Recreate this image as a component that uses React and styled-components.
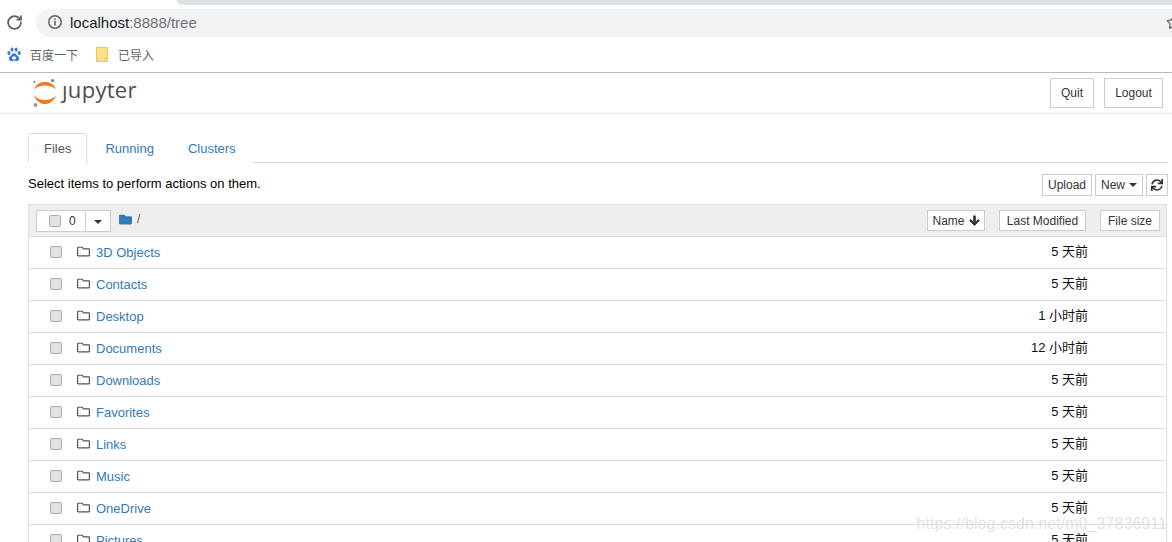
import React from 'react';
import styled, { createGlobalStyle } from 'styled-components';
import { FaFolder, FaRegFolder, FaArrowDown, FaSync } from 'react-icons/fa';
import { RotateCw, Star } from 'lucide-react';

const GlobalStyle = createGlobalStyle`
    html, body {
        margin: 0;
        padding: 0;
        background: #fff;
        overflow: hidden;
    }
    * {
        box-sizing: border-box;
    }
    body {
        font-family: "Liberation Sans", "Noto Sans CJK SC", sans-serif;
        font-size: 13px;
        color: #000;
    }
`

const Page = styled.div`
    position: relative;
    width: 1172px;
    height: 542px;
    overflow: hidden;
`

const TabStrip = styled.div`
    height: 5px;
    padding-left: 177px;
    background: #fff;
`

const TabShape = styled.div`
    height: 5px;
    background: #dee1e6;
    border-bottom-left-radius: 8px;
`

const Toolbar = styled.div`
    display: flex;
    align-items: center;
    height: 32px;
    padding-top: 4px;
`

const ReloadSlot = styled.div`
    display: flex;
    justify-content: center;
    width: 36px;
    padding: 0 8px 2px 0;
    color: #5f6368;
`

const Omnibox = styled.div`
    flex: 1;
    display: flex;
    align-items: center;
    height: 28px;
    padding: 0 0 2px 11px;
    background: #f1f3f4;
    border-radius: 14px 0 0 14px;
    font-size: 15px;
    position: relative;
`

const Host = styled.span`
    margin-left: 7px;
    color: #202124;
`

const UrlRest = styled.span`
    color: #6f7378;
`

const StarSlot = styled.span`
    position: absolute;
    right: -9px;
    top: 6px;
    color: #5f6368;
`

const BookmarkBar = styled.div`
    display: flex;
    align-items: center;
    height: 36px;
    padding-left: 7px;
    padding-bottom: 1px;
    font-size: 12px;
    color: #5f6368;
    border-bottom: 1px solid #b9b9b9;
`

const Bookmark = styled.div`
    display: flex;
    align-items: center;
    gap: ${(p) => p.$gap}px;
    margin-right: 18px;
`

const Header = styled.div`
    display: flex;
    justify-content: space-between;
    align-items: center;
    height: 41px;
    padding: 0 9px 0 32px;
    border-bottom: 1px solid #e7e7e7;
`

const Logo = styled.div`
    display: flex;
    align-items: center;
    gap: 4px;
    margin-top: -2px;
`

const LogoText = styled.span`
    font-family: "Open Sans", sans-serif;
    font-size: 22px;
    line-height: 30px;
    color: #4e4e4e;
    letter-spacing: 0.3px;
    margin-top: -7px;
`

const HeaderButtons = styled.div`
    display: flex;
    gap: 10px;
`

const Button = styled.button`
    display: inline-flex;
    align-items: center;
    justify-content: center;
    gap: ${(p) => p.$gap || 0}px;
    width: ${(p) => p.$w}px;
    height: ${(p) => p.$h}px;
    padding: 0;
    background: #fff;
    border: 1px solid #ccc;
    font-family: inherit;
    font-size: 12px;
    color: #333;
`

const Main = styled.div`
    padding: 19px 4px 0 28px;
`

const Tabs = styled.div`
    display: flex;
    height: 30px;
    border-bottom: 1px solid #ddd;
`

const Tab = styled.div`
    height: 30px;
    padding: 7px ${(p) => (p.$active ? 15 : 16)}px 0;
    margin-right: ${(p) => (p.$active ? 1 : 0)}px;
    line-height: 15px;
    color: ${(p) => (p.$active ? '#555' : '#337ab7')};
    background: #fff;
    border: 1px solid ${(p) => (p.$active ? '#ddd' : 'transparent')};
    border-bottom-color: ${(p) => (p.$active ? '#fff' : 'transparent')};
    border-radius: 2px 2px 0 0;
`

const ActionRow = styled.div`
    display: flex;
    justify-content: space-between;
    align-items: center;
    height: 41px;
    font-size: 13px;
`

const Actions = styled.div`
    display: flex;
    gap: 3px;
    margin-top: 2px;
`

const List = styled.div`
    border: 1px solid #ddd;
    border-bottom: 0;
    margin-right: 1px;
`

const ListHeader = styled.div`
    display: flex;
    align-items: center;
    height: 31px;
    padding: 0 6px 0 7px;
    background: #eee;
`

const SelectGroup = styled.div`
    display: flex;
    height: 22px;
    background: #fff;
    border: 1px solid #ccc;
`

const SelectCount = styled.div`
    display: flex;
    align-items: center;
    gap: 8px;
    width: 49px;
    padding-left: 12px;
    font-size: 12px;
    color: #333;
    border-right: 1px solid #ccc;
`

const SelectCaret = styled.div`
    display: flex;
    align-items: center;
    justify-content: center;
    width: 24px;
    padding-top: 2px;
`

const Caret = styled.span`
    display: inline-block;
    width: 0;
    height: 0;
    border-top: 4px solid #333;
    border-left: 4px solid transparent;
    border-right: 4px solid transparent;
`

const Crumb = styled.div`
    display: flex;
    align-items: center;
    gap: 5px;
    flex: 1;
    margin: -3px 0 0 8px;
    font-size: 12px;
    color: #337ab7;
`

const Slash = styled.span`
    color: #555;
`

const SortButtons = styled.div`
    display: flex;
    gap: 14px;
`

const Row = styled.div`
    display: flex;
    align-items: center;
    height: 32px;
    padding: 0 0 2px 21px;
    border-top: 1px solid #ddd;
`

const Check = styled.span`
    flex: none;
    width: 12px;
    height: 12px;
    background: #e3e3e3;
    border: 1px solid #ababab;
    border-radius: 2px;
`

const FolderIcon = styled.span`
    display: flex;
    width: 14px;
    margin-left: 15px;
    color: #555;
`

const RowLink = styled.a`
    flex: 1;
    margin-left: 5px;
    font-size: 13px;
    color: #337ab7;
    padding-top: 1px;
`

const RowDate = styled.span`
    width: 200px;
    margin-right: 78px;
    margin-top: -2px;
    text-align: right;
    font-size: 13px;
    color: #111;
`

const Watermark = styled.div`
    position: absolute;
    right: 5px;
    bottom: 9px;
    font-size: 16px;
    letter-spacing: 0.05px;
    color: rgba(170, 170, 170, 0.36);
    text-shadow: 0 0 1px rgba(255, 255, 255, 0.7);
    pointer-events: none;
`

const rows = [
    ['3D Objects', '5 天前'],
    ['Contacts', '5 天前'],
    ['Desktop', '1 小时前'],
    ['Documents', '12 小时前'],
    ['Downloads', '5 天前'],
    ['Favorites', '5 天前'],
    ['Links', '5 天前'],
    ['Music', '5 天前'],
    ['OneDrive', '5 天前'],
    ['Pictures', '5 天前'],
];

function InfoIcon() {
    return (
        <svg width="16" height="16" viewBox="0 0 16 16">
            <circle cx="8" cy="8" r="6.2" fill="none" stroke="#5f6368" strokeWidth="1.5" />
            <rect x="7.2" y="7" width="1.6" height="4.4" fill="#5f6368" />
            <rect x="7.2" y="4.5" width="1.6" height="1.6" fill="#5f6368" />
        </svg>
    );
}

function BaiduIcon() {
    return (
        <svg width="14" height="15" viewBox="0 0 14 15" fill="#3a7bd5">
            <ellipse cx="2" cy="6" rx="1.6" ry="2" />
            <ellipse cx="5" cy="2.6" rx="1.5" ry="2.1" />
            <ellipse cx="9.2" cy="2.6" rx="1.5" ry="2.1" />
            <ellipse cx="12.2" cy="6" rx="1.6" ry="2" />
            <path d="M7 6.2c-1.8 0-2.4 1.8-3.6 2.8C2 10.2 1.6 11 1.9 12.3c.4 1.4 1.8 1.9 3 1.7.9-.1 1.4-.3 2.1-.3s1.300.2 2.200.3c1.200.2 2.600-.3 3-1.700.3-1.300-.2-2.100-1.500-3.300C9.500 8 8.800 6.200 7 6.200z" />
            <ellipse cx="7" cy="11" rx="2" ry="1.800" fill="#fff" />
        </svg>
    );
}

function BookmarkFile() {
    return (
        <svg width="12" height="15" viewBox="0 0 12 15">
            <path d="M.5.5h11v14H.5z" fill="#fbe08a" stroke="#f2c94c" />
            <path d="M9 14v-3h2.500" fill="none" stroke="#f2c94c" />
        </svg>
    );
}

function JupyterMark() {
    return (
        <svg width="26" height="30" viewBox="0 0 26 30">
            <path d="M2 12.500C4 6.500 9 5 13 5s9 1.500 11 7.500C21 9.500 17 8.500 13 8.500S5 9.500 2 12.500z" fill="#f37726" />
            <path d="M2 18.500C4 24.500 9 27 13 27s9-2.500 11-8.500C21 21.500 17 23 13 23S5 21.500 2 18.500z" fill="#f37726" />
            <circle cx="20.500" cy="3.500" r="1.500" fill="#767677" />
            <circle cx="2.500" cy="5" r="1" fill="#767677" />
            <circle cx="3.500" cy="28" r="1.900" fill="#989798" />
        </svg>
    );
}

function App() {
    return (
        <Page>
            <GlobalStyle />
            <TabStrip>
                <TabShape />
            </TabStrip>
            <Toolbar>
                <ReloadSlot>
                    <RotateCw size={17} strokeWidth={2.6} />
                </ReloadSlot>
                <Omnibox>
                    <InfoIcon />
                    <Host>localhost</Host>
                    <UrlRest>:8888/tree</UrlRest>
                    <StarSlot>
                        <Star size={15} />
                    </StarSlot>
                </Omnibox>
            </Toolbar>
            <BookmarkBar>
                <Bookmark $gap={9}>
                    <BaiduIcon />
                    百度一下
                </Bookmark>
                <Bookmark $gap={10}>
                    <BookmarkFile />
                    已导入
                </Bookmark>
            </BookmarkBar>
            <Header>
                <Logo>
                    <JupyterMark />
                    <LogoText>ȷupyter</LogoText>
                </Logo>
                <HeaderButtons>
                    <Button $w={44} $h={30}>Quit</Button>
                    <Button $w={59} $h={30}>Logout</Button>
                </HeaderButtons>
            </Header>
            <Main>
                <Tabs>
                    <Tab $active>Files</Tab>
                    <Tab>Running</Tab>
                    <Tab>Clusters</Tab>
                </Tabs>
                <ActionRow>
                    Select items to perform actions on them.
                    <Actions>
                        <Button $w={50} $h={22}>Upload</Button>
                        <Button $w={48} $h={22} $gap={4}>New <Caret /></Button>
                        <Button $w={22} $h={22}><FaSync size={12} /></Button>
                    </Actions>
                </ActionRow>
                <List>
                    <ListHeader>
                        <SelectGroup>
                            <SelectCount>
                                <Check />
                                0
                            </SelectCount>
                            <SelectCaret>
                                <Caret />
                            </SelectCaret>
                        </SelectGroup>
                        <Crumb>
                            <FaFolder size={13} />
                            <Slash>/</Slash>
                        </Crumb>
                        <SortButtons>
                            <Button $w={58} $h={21} $gap={4}>Name <FaArrowDown size={11} stroke="currentColor" strokeWidth={40} /></Button>
                            <Button $w={87} $h={21}>Last Modified</Button>
                            <Button $w={60} $h={21}>File size</Button>
                        </SortButtons>
                    </ListHeader>
                    {rows.map(([name, date]) => (
                        <Row key={name}>
                            <Check />
                            <FolderIcon>
                                <FaRegFolder size={13} />
                            </FolderIcon>
                            <RowLink>{name}</RowLink>
                            <RowDate>{date}</RowDate>
                        </Row>
                    ))}
                </List>
            </Main>
            <Watermark>https://blog.csdn.net/m0_37836911</Watermark>
        </Page>
    );
}

export default App
